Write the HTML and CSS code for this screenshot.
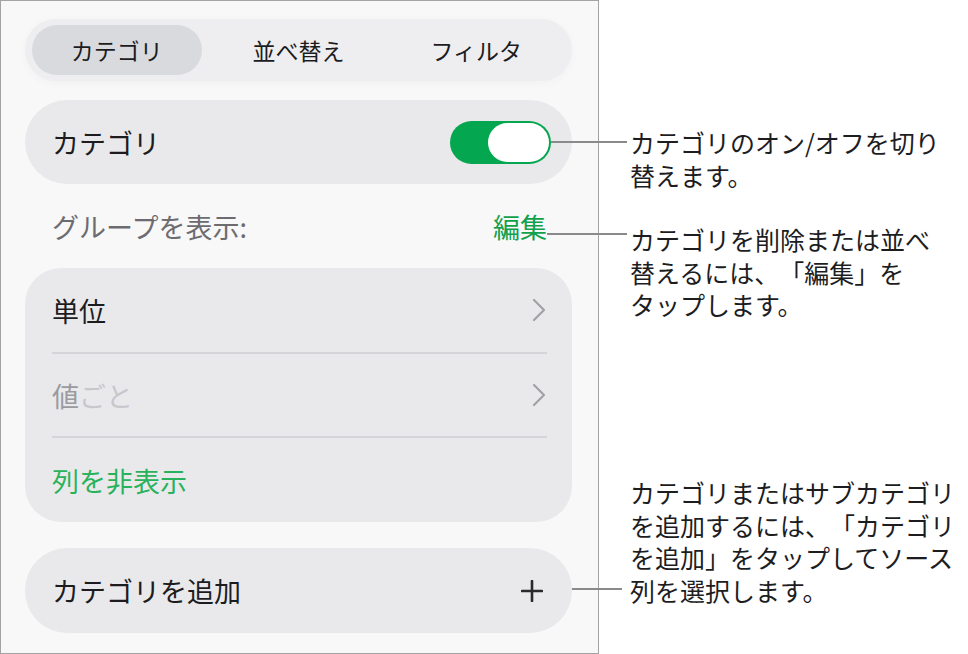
FILE: index.html
```html
<!DOCTYPE html>
<html lang="ja">
<head>
<meta charset="utf-8">
<title>カテゴリ</title>
<link rel="stylesheet" href="styles.css">
</head>
<body>
<div class="page">
  <div class="panel">
    <div class="segmented">
      <div class="seg seg-active">カテゴリ</div>
      <div class="seg">並べ替え</div>
      <div class="seg">フィルタ</div>
    </div>
    <div class="row toggle-row">
      <span class="label">カテゴリ</span>
      <span class="switch"><span class="knob"></span></span>
    </div>
    <div class="group-header">
      <span class="header-label">グループを表示:</span>
      <span class="edit">編集</span>
    </div>
    <div class="card">
      <div class="item">
        <span class="label">単位</span>
        <svg class="chevron" width="14" height="24" viewBox="0 0 14 24"><path d="M2 2 L12 12 L2 22" fill="none" stroke="#a1a1a6" stroke-width="2.2" stroke-linecap="round" stroke-linejoin="round"/></svg>
      </div>
      <div class="sep"></div>
      <div class="item item-mid">
        <span class="label"><span class="dim1">値</span><span class="dim2">ごと</span></span>
        <svg class="chevron" width="14" height="24" viewBox="0 0 14 24"><path d="M2 2 L12 12 L2 22" fill="none" stroke="#a1a1a6" stroke-width="2.2" stroke-linecap="round" stroke-linejoin="round"/></svg>
      </div>
      <div class="sep"></div>
      <div class="item">
        <span class="label green">列を非表示</span>
      </div>
    </div>
    <div class="row add-row">
      <span class="label">カテゴリを追加</span>
      <svg class="plus" width="22" height="22" viewBox="0 0 22 22"><path d="M11 1 V21 M1 11 H21" fill="none" stroke="#2a2a2c" stroke-width="2.6" stroke-linecap="round"/></svg>
    </div>
  </div>

  <div class="leader leader-1"></div>
  <div class="leader leader-2"></div>
  <div class="leader leader-3"></div>
  <p class="note note-1">カテゴリのオン/オフを切り<br>替えます。</p>
  <p class="note note-2">カテゴリを削除または並べ<br>替えるには、「編集」を<br>タップします。</p>
  <p class="note note-3">カテゴリまたはサブカテゴリ<br>を追加するには、「カテゴリ<br>を追加」をタップしてソース<br>列を選択します。</p>
</div>
</body>
</html>
```

FILE: styles.css
```css
* { box-sizing: border-box; }

html, body {
  margin: 0;
  padding: 0;
  background: #ffffff;
}

body {
  font-family: "Noto Sans CJK JP", "Noto Sans", sans-serif;
  color: #1c1c1e;
  text-spacing-trim: space-all;
}

.page {
  position: relative;
  width: 968px;
  height: 654px;
}

.panel {
  width: 599px;
  height: 654px;
  border: 1px solid #a3a3a3;
  background: #f8f8f9;
  padding: 18px 26px 0 24px;
  display: flex;
  flex-direction: column;
}

.segmented {
  height: 62px;
  border-radius: 31px;
  background: #eeeef0;
  padding: 6px 7px;
  display: grid;
  grid-template-columns: 1fr 1fr 1fr;
  box-shadow: 0 2px 10px rgba(0, 0, 0, 0.03);
}

.seg {
  display: flex;
  align-items: center;
  justify-content: center;
  font-size: 23px;
  color: #1c1c1e;
  border-radius: 25px;
}

.seg-active {
  background: #d9dadd;
  margin-right: 8px;
}

.row {
  display: flex;
  align-items: center;
  justify-content: space-between;
  background: #e9e9eb;
}

.label {
  font-size: 27px;
  color: #1c1c1e;
  line-height: 1;
}

.toggle-row {
  margin-top: 19px;
  height: 84px;
  border-radius: 42px;
  padding: 0 21px 0 27px;
}

.switch {
  width: 101px;
  height: 43px;
  border-radius: 22px;
  background: #04a64f;
  padding: 2px;
  display: flex;
  justify-content: flex-end;
}

.knob {
  width: 61px;
  height: 39px;
  border-radius: 20px;
  background: #ffffff;
}

.group-header {
  height: 84px;
  display: flex;
  align-items: center;
  justify-content: space-between;
  padding: 0 25px 0 27px;
}

.header-label {
  font-size: 27px;
  color: #6c6c70;
}

.edit {
  font-size: 27px;
  color: #11a04c;
}

.card {
  background: #e9e9eb;
  border-radius: 36px;
  display: flex;
  flex-direction: column;
}

.item {
  height: 84px;
  display: flex;
  align-items: center;
  justify-content: space-between;
  padding: 0 26px 0 27px;
}

.item-mid {
  height: 82px;
}

.sep {
  height: 2px;
  background: #d5d5d9;
  margin: 0 25px 0 27px;
}

.dim1 { color: #9a9a9f; }
.dim2 { color: #c7c7cc; }
.green { color: #29b25c; }

.add-row {
  margin-top: 26px;
  height: 85px;
  border-radius: 42px;
  padding: 0 29px 0 27px;
}

.leader {
  position: absolute;
  height: 2px;
  background: #8a8a8a;
}

.leader-1 { left: 551px; top: 141px; width: 76px; }
.leader-2 { left: 547px; top: 233px; width: 80px; }
.leader-3 { left: 572px; top: 588px; width: 50px; }

.note {
  position: absolute;
  left: 630px;
  margin: 0;
  font-size: 25px;
  line-height: 32.5px;
  color: #1d1d1f;
  white-space: nowrap;
}

.note-1 { top: 126px; }
.note-2 { top: 223px; }
.note-3 { top: 476px; }
```
